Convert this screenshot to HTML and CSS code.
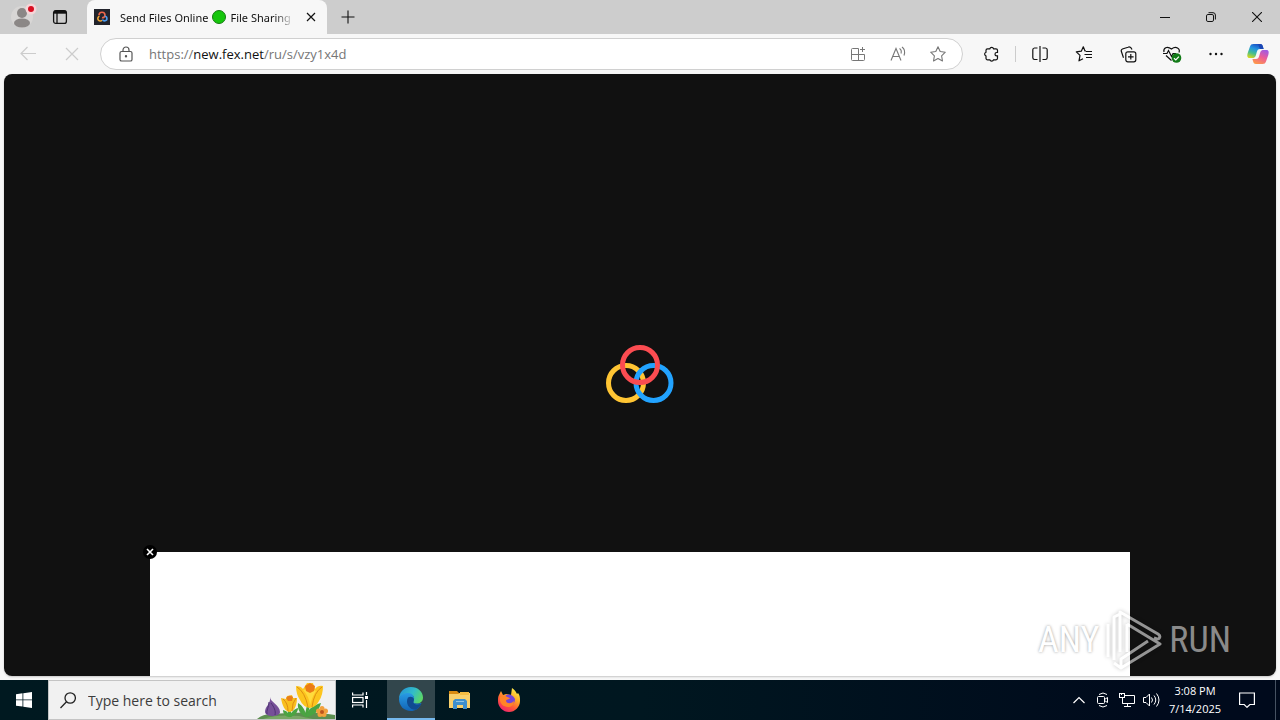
FILE: index.html
```html
<!DOCTYPE html>
<html lang="en">
<head>
<meta charset="utf-8">
<title>Send Files Online</title>
<link rel="stylesheet" href="styles.css">
</head>
<body>
<header class="titlebar">
  <button class="profile" aria-label="Profile">
    <svg width="30" height="30" viewBox="0 0 30 30"><circle cx="15" cy="15" r="11" fill="#d8d6d5"/><circle cx="15" cy="11" r="5" fill="#8b8786"/><ellipse cx="15" cy="21" rx="8" ry="4.5" fill="#8b8786"/><circle cx="24" cy="7" r="5.5" fill="#f6d5d8"/><circle cx="24" cy="7" r="3" fill="#d80f22"/></svg>
  </button>
  <button class="tab-actions" aria-label="Tab actions">
    <svg width="16" height="16" viewBox="0 0 16 16" fill="none" stroke="#111" stroke-width="1.3"><rect x="1.6" y="1.6" width="12.8" height="12.8" rx="2.2"/><path d="M5 4v10"/><path d="M2 3.2h12" stroke-width="3"/></svg>
  </button>
  <div class="tab">
    <svg class="favicon" width="16" height="16" viewBox="0 0 16 16"><rect width="16" height="16" fill="#22242c"/><g fill="none" stroke-width="1.6"><path d="M8 11.200A2.400 2.400 0 1 1 5.500 7.300" stroke="#f2a735"/><path d="M5 6.200A3 3 0 0 1 11 6.200C11 8 9 9 8 8.500" stroke="#f0674a"/><path d="M10.700 7.300A2.300 2.300 0 1 1 8.500 10.500" stroke="#4b9cf0"/></g></svg>
    <span class="tab-title">Send Files Online <i class="dot"></i> File Sharing</span>
    <button class="tab-close" aria-label="Close tab"><svg width="10" height="10" viewBox="0 0 10 10" stroke="#111" stroke-width="1.2"><path d="M1 1l8 8M9 1L1 9"/></svg></button>
  </div>
  <button class="new-tab" aria-label="New tab"><svg width="14" height="14" viewBox="0 0 14 14" stroke="#111" stroke-width="1.1"><path d="M7 .5v13M.5 7h13"/></svg></button>
  <div class="window-controls">
    <button aria-label="Minimize"><svg width="10" height="10" viewBox="0 0 10 10" stroke="#111"><path d="M0 5.5h10"/></svg></button>
    <button aria-label="Restore"><svg width="10" height="10" viewBox="0 0 10 10" fill="none" stroke="#111"><rect x=".5" y="2.5" width="7" height="7" rx="1.4"/><path d="M2.5.7H7A2.4 2.4 0 0 1 9.4 3v4.5"/></svg></button>
    <button aria-label="Close"><svg width="10" height="10" viewBox="0 0 10 10" stroke="#111" stroke-width="1.1"><path d="M0 0l10 10M10 0L0 10"/></svg></button>
  </div>
</header>

<nav class="toolbar">
  <button aria-label="Back" disabled><svg width="16" height="16" viewBox="0 0 16 16" fill="none" stroke="#ccc" stroke-width="1.2"><path d="M16 7.5H1M7.5 1L1 7.5 7.5 14"/></svg></button>
  <button aria-label="Stop" disabled><svg width="14" height="14" viewBox="0 0 14 14" stroke="#ccc" stroke-width="1.2"><path d="M1 1l12 12M13 1L1 13"/></svg></button>
  <div class="omnibox">
    <svg class="lock" width="14" height="16" viewBox="0 0 14 16" fill="none" stroke="#555" stroke-width="1.2"><rect x="1" y="5.5" width="12" height="9.5" rx="1.6"/><path d="M4 5.5V4a3 3 0 0 1 6 0v1.5"/><circle cx="7" cy="10.3" r=".6" fill="#555"/></svg>
    <div class="url">https://<b>new.fex.net</b>/ru/s/vzy1x4d</div>
    <button aria-label="App available"><svg width="16" height="16" viewBox="0 0 16 16" fill="none" stroke="#777"><path d="M8.500 2.500h-6a1 1 0 0 0-1 1v10a1 1 0 0 0 1 1h11a1 1 0 0 0 1-1v-5H1.500M8.500 2.500v12M12.500 1v5M10 3.500h5"/></svg></button>
    <button aria-label="Read aloud"><svg width="18" height="16" viewBox="0 0 18 16" fill="none" stroke="#777" stroke-width="1.1"><path d="M2 14.500L7 2.500l5 12M3.800 10.500h6.400M10.500 2.500q2.500 1.500 1.500 5M13 1q4 3 2 8.500"/></svg></button>
    <button aria-label="Favorite"><svg width="16" height="16" viewBox="0 0 16 16" fill="none" stroke="#777" stroke-width="1.1" stroke-linejoin="round"><path d="M8 .8l2.200 4.700 5.100.7-3.700 3.600.9 5.200L8 12.500 3.500 15l.9-5.200L.7 6.200l5.100-.7z"/></svg></button>
  </div>
  <button class="extensions" aria-label="Extensions"><svg width="16" height="16" viewBox="0 0 16 16" fill="none" stroke="#111" stroke-width="1.200"><path d="M4.500 2.800h2.300a2 2 0 0 1 3.800 0h2.400a1.500 1.500 0 0 1 1.500 1.500v2.200h-.8a1.700 1.700 0 0 0 0 3.400h.8v2.400a1.500 1.500 0 0 1-1.500 1.500h-2.400a2 2 0 0 1-3.800 0H4.500A1.500 1.500 0 0 1 3 12.300V10a2 2 0 0 1 0-3.800V4.300A1.500 1.500 0 0 1 4.500 2.800z"/></svg></button>
  <span class="divider"></span>
  <button aria-label="Split screen"><svg width="16" height="16" viewBox="0 0 16 16" fill="none" stroke="#111" stroke-width="1.200"><path d="M5.500 2H2.500A1.800 1.800 0 0 0 .8 3.800v8A1.800 1.800 0 0 0 2.500 13.500h3M10.500 2h3a1.800 1.800 0 0 1 1.700 1.800v8a1.800 1.800 0 0 1-1.700 1.700h-3M8 0v16"/></svg></button>
  <button aria-label="Favorites"><svg width="18" height="16" viewBox="0 0 18 16" fill="none" stroke="#111" stroke-width="1.200" stroke-linejoin="round"><path d="M11 5H10L8.300.8 6.300 5.200l-5 .7L5 9.400l-1 5.400 4-2M11 5.500h6M9.500 8.500H17M11 11.500h6"/></svg></button>
  <button aria-label="Collections"><svg width="17" height="17" viewBox="0 0 17 17" fill="none" stroke="#111" stroke-width="1.200"><rect x="5.800" y="5.800" width="10" height="10" rx="2"/><path d="M10.800 8v5.600M8 10.800h5.600M3.500 11.800L1.300 5.300A2 2 0 0 1 2.400 3L8 1.200c1.300-.5 3 0 4 2.300"/></svg></button>
  <button aria-label="Browser essentials"><svg width="20" height="18" viewBox="0 0 20 18" fill="none" stroke="#111" stroke-width="1.200"><path d="M2 7C1 3 5 .5 9.500 4 14 .5 18.500 3.500 17 7.500M1 8.500h4L6.500 5.500l3 6 1.500-3h3M4 10.500l5.500 5"/><circle cx="14.500" cy="13" r="4.800" fill="#127b18" stroke="none"/><path d="M12 13.200l1.800 1.700 3.100-3.300" stroke="#fff"/></svg></button>
  <button aria-label="Settings and more"><svg width="14" height="4" viewBox="0 0 14 4" fill="#111"><circle cx="1.500" cy="2" r="1.200"/><circle cx="7" cy="2" r="1.200"/><circle cx="12.500" cy="2" r="1.200"/></svg></button>
  <button class="copilot" aria-label="Copilot"><svg width="22" height="22" viewBox="0 0 22 22">
    <defs><linearGradient id="cool" x1=".6" y1="0" x2=".2" y2="1"><stop offset="0" stop-color="#1b4fc4"/><stop offset=".35" stop-color="#2496e0"/><stop offset=".65" stop-color="#43bd91"/><stop offset="1" stop-color="#d6d81c"/></linearGradient><linearGradient id="warm" x1=".7" y1="0" x2=".2" y2="1"><stop offset="0" stop-color="#a45be0"/><stop offset=".45" stop-color="#ec5d98"/><stop offset="1" stop-color="#ff9b45"/></linearGradient></defs>
    <path d="M6.500 1H13c2 0 2.500 1 3 3l.6 2H13c-2 0-2.600 1-3.200 3l-1 3.500C8.200 14.500 7 15 5 15H2.500C0 15 0 12.500.7 10L3 3.500C3.600 1.800 4.500 1 6.500 1z" fill="url(#cool)"/>
    <path d="M15.500 21H9c-2 0-2.500-1-3-3l-.6-2H9c2 0 2.600-1 3.200-3l1-3.500C13.800 7.500 15 7 17 7h2.500C22 7 22 9.500 21.300 12L19 18.500c-.6 1.700-1.500 2.500-3.500 2.500z" fill="url(#warm)"/><path d="M13 1c2 0 2.500 1 3 3l.6 2H13L11 1z" fill="#1c48b5"/></svg></button>
</nav>

<main class="page">
  <svg class="loader" width="68" height="60" viewBox="0 0 68 60" fill="none" stroke-width="5" role="img" aria-label="Loading"><circle cx="20" cy="38" r="17.500" stroke="#ffc533"/><circle cx="47.500" cy="38" r="17.500" stroke="#22a3ff"/><circle cx="34" cy="20" r="17.500" stroke="#fb4c51"/></svg>
  <aside class="banner">
    <button class="banner-close" aria-label="Close banner"><svg width="8" height="8" viewBox="0 0 8 8" stroke="#fff" stroke-width="1.600"><path d="M1 1l6 6M7 1L1 7"/></svg></button>
  </aside>
</main>

<footer class="taskbar">
  <button class="start" aria-label="Start"><svg width="16" height="16" viewBox="0 0 16 16" fill="#fff"><path d="M0 2.200L6.500 1.300v6.200H0zM7.300 1.200L16 0v7.500H7.300zM0 8.300h6.500v6.300L0 13.700zM7.300 8.300H16V16l-8.700-1.200z"/></svg></button>
  <div class="search">
    <svg width="16" height="17" viewBox="0 0 16 17" fill="none" stroke="#222" stroke-width="1.300"><circle cx="10.200" cy="6" r="5.200"/><path d="M6.500 9.800L.5 16"/></svg>
    <input type="text" placeholder="Type here to search" aria-label="Type here to search">
    <svg class="flowers" width="80" height="38" viewBox="0 0 80 38">
      <path d="M2 38C10 31 22 33 34 32c14-1 32-1 46 2v4z" fill="#5d8f50"/>
      <path d="M8 38c10-4 24-4 36-3l14 3z" fill="#79a765"/>
      <path d="M35 36c0-3-1-6-1-9M52 36c-1-6 1-9 2-13" stroke="#48a43f" stroke-width="3" fill="none"/>
      <path d="M51 36c1-8 8-12 15-14-2 8-7 13-15 14zM51 36c0-6-3-11-8-14-1 7 3 12 8 14zM35 36c1-5 4-8 8-9 0 4-3 8-8 9zM34 36c-3 0-6-3-6-7 4 1 6 3 6 7z" fill="#4aa442"/>
      <path d="M15 16c0 5 10 8 10 15 0 5-14 6-15 0 0-6 6-8 5-15z" fill="#765098"/><path d="M14 21c0 5-3 9-2 12M16 22c3 4 5 8 4 12" stroke="#4e3274" fill="none"/>
      <path d="M26 17l5 1 1-3 5-1 1 3 4 0c0 6-2 13-7 14-5 0-8-7-9-14z" fill="#f9bf1e"/><path d="M28 18q5 4 5 12M41 17q-4 5-4 13" stroke="#dd8b12" fill="none"/><path d="M31 17q3-4 7-1l-1 4h-4z" fill="#e87f19"/>
      <path d="M41 5q5 0 7 3l4-6 6 0 2 6q3-4 8-3 0 9-4 15-3 6-9 7-7-1-10-8-4-6-4-14z" fill="#fdc51e"/><path d="M42 6q8 5 11 20M67 6q-8 5-10 20" fill="none" stroke="#dd8e12"/><path d="M48 9q6 6 7 15 3-10 6-14l-5-3z" fill="#ffdb3d"/><path d="M50 5l5-3 5 3-1 5-4 2-4-2z" fill="#eb7b16"/>
      <g fill="#f2a13d"><circle cx="67" cy="27.500" r="2.500"/><circle cx="70.500" cy="30" r="2.500"/><circle cx="69" cy="33.500" r="2.500"/><circle cx="65" cy="33.500" r="2.500"/><circle cx="63.500" cy="30" r="2.500"/></g><circle cx="67" cy="31" r="2" fill="#bc541d"/>
    </svg>
  </div>
  <button class="task-view" aria-label="Task view"><svg width="16" height="16" viewBox="0 0 16 16" fill="none" stroke="#fff" stroke-width="1.200"><path d="M.6.500V3h10.400V.5M.6 15.500V13H11v2.500"/><rect x=".6" y="5.500" width="10.400" height="5"/><path d="M14.500 0v3M14.500 8v8"/><path d="M13 5.500h3" stroke-width="3"/></svg></button>
  <button class="app active" aria-label="Microsoft Edge"><svg width="24" height="24" viewBox="0 0 24 24">
    <defs><linearGradient id="edge-top" x1="0" y1=".2" x2="1" y2=".6"><stop offset="0" stop-color="#2593d8"/><stop offset=".55" stop-color="#32bcc8"/><stop offset="1" stop-color="#5cd765"/></linearGradient><linearGradient id="edge-low" x1="0" y1="0" x2="0" y2="1"><stop offset="0" stop-color="#289be5"/><stop offset="1" stop-color="#1264b5"/></linearGradient></defs>
    <path d="M0 12C0 5 5 0 12 0s12 5 12 10.500c0 4-3 6-6.500 6-3 0-4-1-3-2.500 2-4-1-7-5-7C5 7.500 1 9 0 12z" fill="url(#edge-top)"/>
    <path d="M0 12C1 8 5 6 9 6c4 0 6.500 3 6 6-.3 2-1 2.500-.5 3.500 1.500 1.500 5 1.500 8 .5C20 22 16 24 12 24 5 24 0 19 0 12z" fill="url(#edge-low)"/>
    <path d="M9 10.500C6 16 10 23 17 22.800c2.500-1.500 4.500-3.800 5.500-6.300-3 1.500-6 1.500-8-.5-.8-1 .6-2 .5-4-1-2.500-4-3-6-1.500z" fill="#104b91"/></svg></button>
  <button class="app" aria-label="File Explorer"><svg width="22" height="20" viewBox="0 0 22 20"><path d="M0 1h8l2 2h11v4H0z" fill="#d98c12"/><path d="M0 4h9l2-1h10v15H0z" fill="#f8d06c"/><path d="M11 2h9v3h-9z" fill="#f4bc43"/><path d="M4 19v-8l2-2h10l2 2v8h-4v-4H8v4z" fill="#3d8fce"/><path d="M7 11h8v1H7z" fill="#90c5e5"/></svg></button>
  <button class="app" aria-label="Firefox"><svg width="24" height="24" viewBox="0 0 24 24">
    <defs><linearGradient id="fox" x1=".8" y1="0" x2=".2" y2="1"><stop offset="0" stop-color="#fff44f"/><stop offset=".35" stop-color="#ffac26"/><stop offset=".65" stop-color="#ff5938"/><stop offset="1" stop-color="#ed1d74"/></linearGradient></defs>
    <path d="M2 7l2-4 2 4 3-1 5 1 1-7c3 2 4 4 5 6l1-1c2 2 2 5 2 8 0 6-5 11-11 11S1 19 1 13c0-3 0-4 1-6z" fill="url(#fox)"/><path d="M9 7q6-2 9 4 0 6-6 6-5-1-5-5z" fill="#7446d8"/><path d="M3 9c4-3 7 0 10 1-1 2-4 1-4 3 1 3 5 3 8 0 0 4-3 6-6 6-5 0-9-4-8-10z" fill="#ff8427"/></svg></button>
  <div class="tray">
    <button aria-label="Show hidden icons"><svg width="12" height="8" viewBox="0 0 12 8" fill="none" stroke="#fff" stroke-width="1.200"><path d="M.5 7L6 1.500 11.500 7"/></svg></button>
    <button aria-label="Camera"><svg width="12" height="16" viewBox="0 0 12 16" fill="none" stroke="#fff"><rect x=".5" y="4.500" width="7" height="7" rx="1"/><path d="M7.500 7.500l3-2v5l-3-2M2 2.500q4-3 8 0M2 13.500q4 3 8 0"/></svg></button>
    <button aria-label="Network"><svg width="16" height="14" viewBox="0 0 16 14" fill="none" stroke="#fff"><path d="M5.500 2.500h10v8h-12V6M8.500 10.500v3M5 13.500h7M3.500 5v5.500"/><rect x=".5" y=".5" width="5" height="4"/><path d="M2.500 0v2"/></svg></button>
    <button aria-label="Volume"><svg width="17" height="14" viewBox="0 0 17 14" fill="none" stroke="#fff"><path d="M.5 4.500h2.500L6.500 1v12L3 9.500H.5zM8.500 4.500q2 2.500 0 5M11 2.500q3.500 4.500 0 9M13.500.5q5 6.500 0 13"/></svg></button>
    <button class="clock"><time>3:08 PM</time><time>7/14/2025</time></button>
    <button class="notifications" aria-label="Notifications"><svg width="16" height="16" viewBox="0 0 16 16" fill="none" stroke="#fff" stroke-width="1.200"><path d="M.6 1h14.800v11.500h-4.500L8 15.300l-2.800-2.800H.6z"/></svg></button>
    <button class="show-desktop" aria-label="Show desktop"></button>
  </div>
</footer>

<div class="watermark">
  <span class="any">ANY</span>
  <svg width="58" height="60" viewBox="0 0 58 60" fill="none" stroke="#fff" stroke-linejoin="round" stroke-width="3"><path d="M15 42V2l38 22c3 2 2 5-1 5l-3-1M9 50V7l6-3M3 47V14M22 14l33 20-39 24-7-5M16 58V49l27-18M22 14v28"/></svg>
  <span class="run">RUN</span>
</div>
</body>
</html>
```

FILE: styles.css
```css
* { box-sizing: border-box; }

body {
  margin: 0;
  min-height: 100vh;
  display: flex;
  flex-direction: column;
  background: #f7f7f7;
  font-family: "Open Sans", "Noto Sans", sans-serif;
  font-size: 12px;
  color: #111;
  overflow: hidden;
}

button {
  display: flex;
  align-items: center;
  justify-content: center;
  flex: none;
  padding: 0;
  border: 0;
  background: none;
  color: inherit;
  font: inherit;
}

svg { display: block; flex: none; }

.titlebar {
  display: flex;
  height: 34px;
  background: #cdcdcd;
}

.profile { width: 30px; margin-left: 7px; }
.tab-actions { width: 46px; }

.tab {
  display: flex;
  align-items: center;
  width: 240px;
  margin-left: 4px;
  padding: 0 8px 0 7px;
  border-radius: 8px 8px 0 0;
  background: #f7f7f7;
}

.tab-title {
  display: flex;
  align-items: center;
  gap: 4px;
  flex: 1;
  margin-left: 10px;
  white-space: nowrap;
  font-family: "Noto Sans", sans-serif;
  font-size: 11px;
  mask-image: linear-gradient(to right, #000 88%, transparent);
}

.dot {
  width: 14px;
  height: 14px;
  border: 1px solid #157a12;
  border-radius: 50%;
  background: #16c60c;
}

.tab-close { width: 16px; height: 20px; margin-left: 8px; }
.new-tab { width: 42px; }
.window-controls { display: flex; margin-left: auto; }
.window-controls button { width: 46px; }

.toolbar {
  display: flex;
  align-items: center;
  height: 40px;
  padding: 0 2px 0 6px;
}

.toolbar > button { width: 44px; height: 32px; }
.toolbar .copilot { width: 40px; }
.toolbar .extensions { margin-left: 6px; }

.omnibox {
  display: flex;
  align-items: center;
  flex: 1;
  height: 32px;
  margin-left: 6px;
  padding: 0 4px 0 18px;
  border: 1px solid #d0d0d0;
  border-radius: 16px;
  background: #fff;
}

.omnibox button { width: 40px; height: 30px; }

.url {
  flex: 1;
  margin-left: 16px;
  font-size: 13px;
  color: #767676;
}

.url b { font-weight: 400; color: #111; }

.divider {
  width: 1px;
  height: 16px;
  margin: 0 2px;
  background: #ccc;
}

.page {
  position: relative;
  display: grid;
  flex: 1;
  place-items: center;
  margin: 0 4px 4px;
  border-radius: 8px;
  background: #111;
  box-shadow: 0 1px 2px rgba(0, 0, 0, 0.2);
}

.banner {
  position: absolute;
  bottom: 0;
  left: 50%;
  width: 77%;
  height: 124px;
  margin-left: -38.5%;
  background: #fff;
}

.banner-close {
  position: absolute;
  top: -7px;
  left: -7px;
  width: 14px;
  height: 14px;
  border-radius: 50%;
  background: #000;
}

.taskbar {
  display: flex;
  height: 40px;
  background: linear-gradient(to right, #001920, #001720 50%, #000a1c 90%);
  color: #fff;
}

.start { width: 48px; }

.search {
  position: relative;
  display: flex;
  align-items: center;
  width: 288px;
  padding-left: 11px;
  border: 1px solid #c4c4c4;
  background: #f1f1f1;
}

.search input {
  flex: 1;
  min-width: 0;
  margin-left: 12px;
  padding: 0;
  border: 0;
  background: none;
  font-family: inherit;
  font-size: 14px;
}

.search input::placeholder { color: #3c3c3c; opacity: 1; }
.flowers { position: absolute; right: 0; bottom: 0; }

.task-view { width: 48px; margin-right: 3px; }
.app { width: 48px; margin-right: 1px; }

.app.active {
  background: #32464c;
  border-bottom: 2px solid #76b9ed;
}

.tray { display: flex; margin-left: auto; }
.tray button { width: 24px; }

.tray .clock {
  width: 64px;
  flex-direction: column;
  font-size: 11px;
  line-height: 18px;
}

.tray .notifications { width: 40px; }

.tray .show-desktop {
  width: 5px;
  margin-left: 8px;
  border-left: 1px solid #465262;
}

.watermark {
  position: absolute;
  right: 49px;
  bottom: 50px;
  display: flex;
  align-items: center;
  gap: 6px;
  font-family: "Liberation Sans Narrow", "Roboto Condensed", "Liberation Sans", sans-serif;
  font-size: 36px;
  line-height: 60px;
  color: #8a8a8a;
  pointer-events: none;
}

.watermark svg {
  opacity: 0.55;
  filter: drop-shadow(0 0 2px rgba(0, 0, 0, 0.4));
}

.any { color: #fff; text-shadow: 0 0 3px rgba(0, 0, 0, 0.4); }
```
